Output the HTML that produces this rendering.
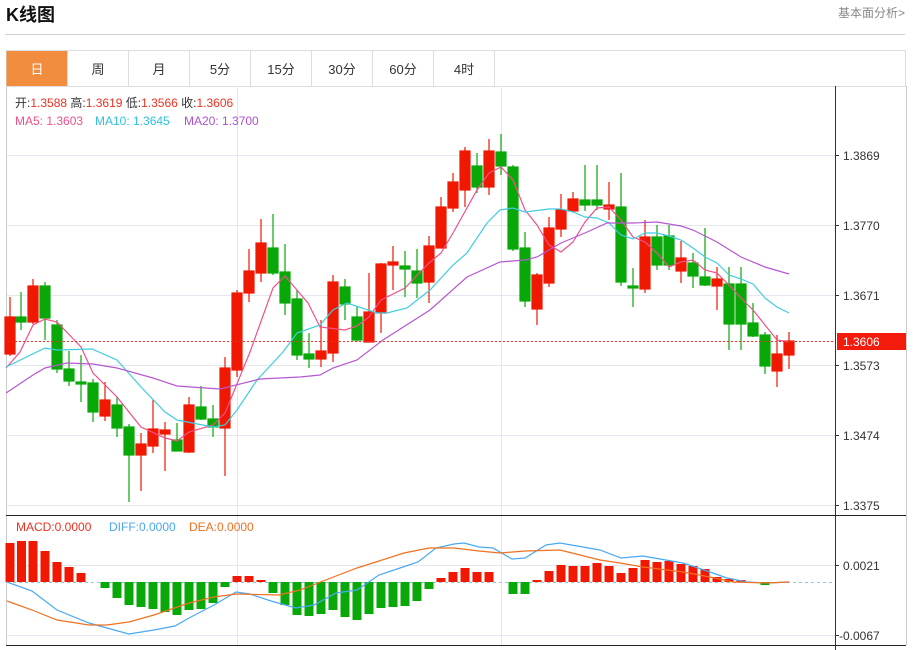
<!DOCTYPE html>
<html><head><meta charset="utf-8"><style>
body{margin:0;width:915px;height:650px;background:#fff;overflow:hidden;font-family:"Liberation Sans","Noto Sans CJK SC",sans-serif;}
</style></head><body>
<svg width="915" height="650" xmlns="http://www.w3.org/2000/svg" style="position:absolute;left:0;top:0;font-family:'Liberation Sans','Noto Sans CJK SC',sans-serif">
<text x="6" y="21" font-size="18" font-weight="bold" fill="#111">K线图</text>
<text x="838" y="17" font-size="12" fill="#888">基本面分析&gt;</text>
<line x1="5" y1="34.5" x2="905" y2="34.5" stroke="#d0d0d0" stroke-width="1"/>
<!-- tabs -->
<rect x="6.5" y="50.5" width="899" height="36" fill="#fff" stroke="#ddd"/>
<rect x="6.5" y="51" width="60.5" height="35" fill="#f28c3e"/>
<g stroke="#ddd"><line x1="67.5" y1="51" x2="67.5" y2="86"/><line x1="128.5" y1="51" x2="128.5" y2="86"/><line x1="189.5" y1="51" x2="189.5" y2="86"/><line x1="250.5" y1="51" x2="250.5" y2="86"/><line x1="311.5" y1="51" x2="311.5" y2="86"/><line x1="372.5" y1="51" x2="372.5" y2="86"/><line x1="433.5" y1="51" x2="433.5" y2="86"/><line x1="494.5" y1="51" x2="494.5" y2="86"/></g>
<g font-size="13" text-anchor="middle" fill="#333"><text x="37" y="74" fill="#fff">日</text><text x="98" y="74">周</text><text x="159" y="74">月</text><text x="220" y="74">5分</text><text x="281" y="74">15分</text><text x="342" y="74">30分</text><text x="403" y="74">60分</text><text x="464" y="74">4时</text></g>
<!-- chart frame -->
<line x1="6.5" y1="86" x2="6.5" y2="645" stroke="#ccc"/>
<line x1="906.5" y1="86" x2="906.5" y2="645" stroke="#ccc"/>
<g stroke="#e3e8ee"><line x1="7" y1="155.5" x2="835" y2="155.5"/><line x1="7" y1="225.5" x2="835" y2="225.5"/><line x1="7" y1="295.5" x2="835" y2="295.5"/><line x1="7" y1="365.5" x2="835" y2="365.5"/><line x1="7" y1="435.5" x2="835" y2="435.5"/><line x1="7" y1="505.5" x2="835" y2="505.5"/><line x1="7" y1="565.5" x2="835" y2="565.5"/><line x1="7" y1="635.5" x2="835" y2="635.5"/><line x1="237.5" y1="86" x2="237.5" y2="645"/><line x1="501.5" y1="86" x2="501.5" y2="645"/></g>
<line x1="835.5" y1="86" x2="835.5" y2="650" stroke="#333"/>
<line x1="6" y1="515.5" x2="906" y2="515.5" stroke="#222"/>
<line x1="6" y1="645.5" x2="906" y2="645.5" stroke="#222"/>
<g stroke="#333"><line x1="835" y1="155.5" x2="839" y2="155.5"/><line x1="835" y1="225.5" x2="839" y2="225.5"/><line x1="835" y1="295.5" x2="839" y2="295.5"/><line x1="835" y1="365.5" x2="839" y2="365.5"/><line x1="835" y1="435.5" x2="839" y2="435.5"/><line x1="835" y1="505.5" x2="839" y2="505.5"/><line x1="835" y1="565.5" x2="839" y2="565.5"/><line x1="835" y1="635.5" x2="839" y2="635.5"/></g>
<g font-size="12" fill="#333"><text x="843" y="160">1.3869</text><text x="843" y="230">1.3770</text><text x="843" y="300">1.3671</text><text x="843" y="370">1.3573</text><text x="843" y="440">1.3474</text><text x="843" y="510">1.3375</text><text x="843" y="570">0.0021</text><text x="839" y="640">-0.0067</text></g>
<!-- legend -->
<g font-size="12"><text x="15" y="107" fill="#333">开:<tspan fill="#f03020">1.3588</tspan>  高:<tspan fill="#f03020">1.3619</tspan>  低:<tspan fill="#f03020">1.3566</tspan>  收:<tspan fill="#f03020">1.3606</tspan></text>
<text x="15" y="125" fill="#f0508a">MA5: 1.3603</text><text x="95" y="125" fill="#30c0e0">MA10: 1.3645</text><text x="184" y="125" fill="#b050d0">MA20: 1.3700</text>
<text x="16" y="531" fill="#f03020">MACD:0.0000</text><text x="109" y="531" fill="#4aa8f0">DIFF:0.0000</text><text x="189" y="531" fill="#f07020">DEA:0.0000</text></g>
<!-- candles -->
<g stroke-width="1.2">
<g stroke="#f01800" fill="#f01800">
<line x1="10" y1="297" x2="10" y2="356"/><rect x="5" y="317" width="10" height="37"/>
<line x1="33" y1="279" x2="33" y2="324"/><rect x="28" y="286" width="10" height="36"/>
<line x1="105" y1="382" x2="105" y2="421"/><rect x="100" y="400" width="10" height="16"/>
<line x1="141" y1="433" x2="141" y2="491"/><rect x="136" y="444" width="10" height="11"/>
<line x1="153" y1="400" x2="153" y2="453"/><rect x="148" y="429" width="10" height="17"/>
<line x1="165" y1="422" x2="165" y2="471"/><rect x="160" y="430" width="10" height="4"/>
<line x1="189" y1="397" x2="189" y2="453"/><rect x="184" y="405" width="10" height="47"/>
<line x1="225" y1="357" x2="225" y2="476"/><rect x="220" y="368" width="10" height="60"/>
<line x1="237" y1="290" x2="237" y2="377"/><rect x="232" y="293" width="10" height="77"/>
<line x1="249" y1="249" x2="249" y2="302"/><rect x="244" y="271" width="10" height="22"/>
<line x1="261" y1="219" x2="261" y2="282"/><rect x="256" y="243" width="10" height="30"/>
<line x1="321" y1="320" x2="321" y2="367"/><rect x="316" y="351" width="10" height="8"/>
<line x1="333" y1="275" x2="333" y2="362"/><rect x="328" y="282" width="10" height="71"/>
<line x1="369" y1="273" x2="369" y2="342"/><rect x="364" y="312" width="10" height="30"/>
<line x1="381" y1="263" x2="381" y2="333"/><rect x="376" y="264" width="10" height="49"/>
<line x1="393" y1="246" x2="393" y2="290"/><rect x="388" y="262" width="10" height="3"/>
<line x1="429" y1="236" x2="429" y2="303"/><rect x="424" y="246" width="10" height="36"/>
<line x1="441" y1="197" x2="441" y2="248"/><rect x="436" y="207" width="10" height="41"/>
<line x1="453" y1="173" x2="453" y2="212"/><rect x="448" y="182" width="10" height="26"/>
<line x1="465" y1="147" x2="465" y2="207"/><rect x="460" y="151" width="10" height="39"/>
<line x1="489" y1="139" x2="489" y2="195"/><rect x="484" y="151" width="10" height="36"/>
<line x1="537" y1="273" x2="537" y2="325"/><rect x="532" y="275" width="10" height="34"/>
<line x1="549" y1="217" x2="549" y2="287"/><rect x="544" y="228" width="10" height="55"/>
<line x1="561" y1="194" x2="561" y2="237"/><rect x="556" y="210" width="10" height="19"/>
<line x1="573" y1="192" x2="573" y2="212"/><rect x="568" y="199" width="10" height="12"/>
<line x1="609" y1="182" x2="609" y2="220"/><rect x="604" y="205" width="10" height="4"/>
<line x1="645" y1="220" x2="645" y2="293"/><rect x="640" y="237" width="10" height="52"/>
<line x1="681" y1="241" x2="681" y2="283"/><rect x="676" y="258" width="10" height="13"/>
<line x1="717" y1="267" x2="717" y2="310"/><rect x="712" y="279" width="10" height="7"/>
<line x1="777" y1="335" x2="777" y2="387"/><rect x="772" y="354" width="10" height="17"/>
<line x1="789" y1="332" x2="789" y2="369"/><rect x="784" y="341" width="10" height="14"/>
</g>
<g stroke="#08a808" fill="#08a808">
<line x1="21" y1="292" x2="21" y2="330"/><rect x="16" y="317" width="10" height="5"/>
<line x1="45" y1="282" x2="45" y2="340"/><rect x="40" y="286" width="10" height="32"/>
<line x1="57" y1="320" x2="57" y2="373"/><rect x="52" y="325" width="10" height="44"/>
<line x1="69" y1="351" x2="69" y2="386"/><rect x="64" y="369" width="10" height="12"/>
<line x1="81" y1="355" x2="81" y2="402"/><rect x="76" y="382" width="10" height="2"/>
<line x1="93" y1="379" x2="93" y2="422"/><rect x="88" y="383" width="10" height="29"/>
<line x1="117" y1="397" x2="117" y2="437"/><rect x="112" y="405" width="10" height="23"/>
<line x1="129" y1="424" x2="129" y2="502"/><rect x="124" y="427" width="10" height="28"/>
<line x1="177" y1="423" x2="177" y2="451"/><rect x="172" y="440" width="10" height="11"/>
<line x1="201" y1="386" x2="201" y2="420"/><rect x="196" y="407" width="10" height="12"/>
<line x1="213" y1="405" x2="213" y2="437"/><rect x="208" y="419" width="10" height="8"/>
<line x1="273" y1="214" x2="273" y2="275"/><rect x="268" y="248" width="10" height="25"/>
<line x1="285" y1="244" x2="285" y2="315"/><rect x="280" y="272" width="10" height="31"/>
<line x1="297" y1="290" x2="297" y2="360"/><rect x="292" y="299" width="10" height="56"/>
<line x1="309" y1="333" x2="309" y2="368"/><rect x="304" y="354" width="10" height="5"/>
<line x1="345" y1="279" x2="345" y2="320"/><rect x="340" y="287" width="10" height="17"/>
<line x1="357" y1="306" x2="357" y2="342"/><rect x="352" y="317" width="10" height="23"/>
<line x1="405" y1="251" x2="405" y2="297"/><rect x="400" y="266" width="10" height="3"/>
<line x1="417" y1="249" x2="417" y2="298"/><rect x="412" y="271" width="10" height="12"/>
<line x1="477" y1="153" x2="477" y2="193"/><rect x="472" y="166" width="10" height="21"/>
<line x1="501" y1="134" x2="501" y2="175"/><rect x="496" y="152" width="10" height="14"/>
<line x1="513" y1="165" x2="513" y2="251"/><rect x="508" y="167" width="10" height="82"/>
<line x1="525" y1="232" x2="525" y2="307"/><rect x="520" y="248" width="10" height="53"/>
<line x1="585" y1="165" x2="585" y2="211"/><rect x="580" y="200" width="10" height="5"/>
<line x1="597" y1="165" x2="597" y2="210"/><rect x="592" y="200" width="10" height="5"/>
<line x1="621" y1="173" x2="621" y2="286"/><rect x="616" y="207" width="10" height="75"/>
<line x1="633" y1="268" x2="633" y2="307"/><rect x="628" y="286" width="10" height="2"/>
<line x1="657" y1="225" x2="657" y2="270"/><rect x="652" y="237" width="10" height="28"/>
<line x1="669" y1="225" x2="669" y2="270"/><rect x="664" y="236" width="10" height="29"/>
<line x1="693" y1="253" x2="693" y2="288"/><rect x="688" y="263" width="10" height="13"/>
<line x1="705" y1="228" x2="705" y2="286"/><rect x="700" y="277" width="10" height="8"/>
<line x1="729" y1="267" x2="729" y2="350"/><rect x="724" y="284" width="10" height="40"/>
<line x1="741" y1="267" x2="741" y2="350"/><rect x="736" y="284" width="10" height="40"/>
<line x1="753" y1="303" x2="753" y2="337"/><rect x="748" y="323" width="10" height="13"/>
<line x1="765" y1="332" x2="765" y2="374"/><rect x="760" y="335" width="10" height="31"/>
</g></g>
<!-- MA lines -->
<g fill="none" stroke-width="1.2">
<polyline stroke="#f0508a" points="6,368 20,352 33,325 45,319 57,322 81,347 93,373 117,397 141,427 165,438 177,441 189,432 213,425 225,413 250,352 273,288 285,276 308,303 320,327 345,330 357,326 369,317 381,300 405,288 429,263 441,253 453,233 477,190 489,173 501,167 513,180 525,210 537,225 549,245 561,252 573,242 585,222 597,208 609,207 621,220 633,237 645,242 657,253 669,267 681,262 693,260 705,270 717,273 729,285 741,298 753,310 765,325 777,340 789,342"/>
<polyline stroke="#40cce0" points="6,367 45,348 57,350 92,349 117,360 141,387 165,412 177,420 213,427 225,425 237,410 257,380 283,352 297,333 320,325 333,310 347,303 377,313 387,313 407,308 430,290 453,265 467,253 487,223 500,210 513,208 525,212 549,209 561,209 573,212 585,217 597,218 609,223 621,235 633,239 645,233 657,233 669,236 681,240 693,248 705,257 717,263 729,275 741,279 753,284 765,298 777,307 789,313"/>
<polyline stroke="#b558d0" points="6,393 33,375 45,368 67,363 93,364 117,368 153,378 177,386 220,389 260,379 300,377 320,375 333,368 357,360 383,340 430,310 467,277 500,262 525,260 537,257 561,243 585,233 607,223 633,223 657,222 681,226 693,230 717,242 741,257 765,267 789,274"/>
</g>
<!-- last price -->
<line x1="7" y1="341.5" x2="835" y2="341.5" stroke="#f03020" stroke-dasharray="2,2"/>
<rect x="837" y="333" width="69" height="17" fill="#f21b0c"/>
<text x="843" y="346" font-size="12" fill="#fff">1.3606</text>
<!-- MACD -->
<line x1="7" y1="582.5" x2="835" y2="582.5" stroke="#8cc8e0" stroke-dasharray="3,3"/>
<g fill="#f01800">
<rect x="5.5" y="543" width="9" height="39"/><rect x="17" y="541" width="9" height="41"/><rect x="28.5" y="541" width="9" height="41"/><rect x="40.5" y="551" width="9" height="31"/><rect x="52.5" y="562" width="9" height="20"/><rect x="64.5" y="567" width="9" height="15"/><rect x="76.5" y="573" width="9" height="9"/>
<rect x="232.5" y="576" width="9" height="6"/><rect x="244.5" y="576" width="9" height="6"/><rect x="256.5" y="580" width="9" height="2"/>
<rect x="436.5" y="578" width="9" height="4"/><rect x="448.5" y="572" width="9" height="10"/><rect x="460.5" y="568" width="9" height="14"/><rect x="472.5" y="572" width="9" height="10"/><rect x="484.5" y="572" width="9" height="10"/>
<rect x="532.5" y="580" width="9" height="2"/><rect x="544.5" y="571" width="9" height="11"/><rect x="556.5" y="565" width="9" height="17"/><rect x="568.5" y="566" width="9" height="16"/><rect x="580.5" y="566" width="9" height="16"/><rect x="592.5" y="563" width="9" height="19"/><rect x="604.5" y="566" width="9" height="16"/><rect x="616.5" y="573" width="9" height="9"/><rect x="628.5" y="568" width="9" height="14"/><rect x="640.5" y="560" width="9" height="22"/><rect x="652.5" y="562" width="9" height="20"/><rect x="664.5" y="561" width="9" height="21"/><rect x="676.5" y="564" width="9" height="18"/><rect x="688.5" y="566" width="9" height="16"/><rect x="700.5" y="569" width="9" height="13"/><rect x="712.5" y="577" width="9" height="5"/><rect x="724.5" y="579" width="9" height="3"/><rect x="736.5" y="580" width="9" height="2"/>
</g>
<g fill="#08a808">
<rect x="100.5" y="582" width="9" height="6"/><rect x="112.5" y="582" width="9" height="16"/><rect x="124.5" y="582" width="9" height="23"/><rect x="136.5" y="582" width="9" height="25"/><rect x="148.5" y="582" width="9" height="27"/><rect x="160.5" y="582" width="9" height="30"/><rect x="172.5" y="582" width="9" height="33"/><rect x="184.5" y="582" width="9" height="28"/><rect x="196.5" y="582" width="9" height="27"/><rect x="208.5" y="582" width="9" height="21"/><rect x="220.5" y="582" width="9" height="5"/>
<rect x="268.5" y="582" width="9" height="11"/><rect x="280.5" y="582" width="9" height="23"/><rect x="292.5" y="582" width="9" height="33"/><rect x="304.5" y="582" width="9" height="34"/><rect x="316.5" y="582" width="9" height="32"/><rect x="328.5" y="582" width="9" height="28"/><rect x="340.5" y="582" width="9" height="35"/><rect x="352.5" y="582" width="9" height="38"/><rect x="364.5" y="582" width="9" height="32"/><rect x="376.5" y="582" width="9" height="26"/><rect x="388.5" y="582" width="9" height="25"/><rect x="400.5" y="582" width="9" height="24"/><rect x="412.5" y="582" width="9" height="19"/><rect x="424.5" y="582" width="9" height="7"/>
<rect x="508.5" y="582" width="9" height="12"/><rect x="520.5" y="582" width="9" height="12"/><rect x="760.5" y="582" width="9" height="3"/>
</g>
<g fill="none" stroke-width="1.2">
<polyline stroke="#4aa8f0" points="7,582 32,591 57,610 89,623 107,628 129,634 154,630 175,626 189,618 214,605 236,592 250,594 271,601 296,608 314,605 336,593 357,590 379,575 400,568 418,562 436,548 454,544 464,543 479,547 493,548 512,559 525,558 546,545 560,543 600,550 621,558 643,556 660,559 683,563 710,572 727,578 747,582 767,583 789,582"/>
<polyline stroke="#f07020" points="7,601 32,610 57,620 89,625 107,625 129,622 154,615 189,603 214,597 236,594 279,595 300,590 336,576 357,568 379,561 404,553 429,548 454,548 479,551 500,553 525,551 560,550 600,560 620,563 643,567 683,572 710,577 733,582 767,583 789,582"/>
</g>
</svg>
</body></html>
